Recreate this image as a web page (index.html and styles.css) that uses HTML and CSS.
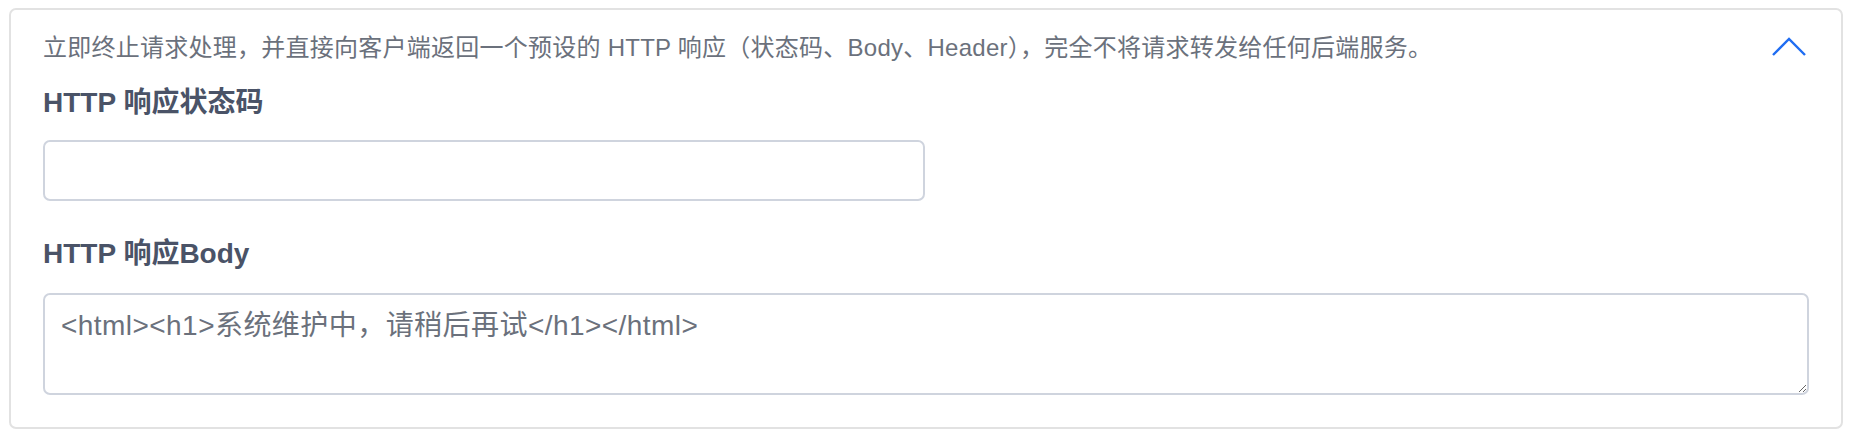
FILE: index.html
```html
<!DOCTYPE html>
<html lang="zh-CN">
<head>
<meta charset="utf-8">
<link rel="stylesheet" href="styles.css">
</head>
<body>
  <section class="card">
    <div class="card-head">
      <p class="desc">立即终止请求处理，并直接向客户端返回一个预设的 HTTP 响应（状态码、Body、Header），完全不将请求转发给任何后端服务。</p>
      <button class="toggle" type="button" aria-label="收起">
        <svg width="34" height="19" viewBox="0 0 34 19" fill="none">
          <polyline points="1,18 17,2 33,18" stroke="#1f6df2" stroke-width="2.4" stroke-linejoin="miter"/>
        </svg>
      </button>
    </div>
    <label class="field-label" for="status">HTTP 响应状态码</label>
    <input class="field-input" id="status" type="text">
    <label class="field-label body-label" for="body">HTTP 响应Body</label>
    <textarea class="field-textarea" id="body">&lt;html&gt;&lt;h1&gt;系统维护中，请稍后再试&lt;/h1&gt;&lt;/html&gt;</textarea>
  </section>
</body>
</html>
```

FILE: styles.css
```css
* { box-sizing: border-box; }

html, body {
  margin: 0;
  background: #ffffff;
}

body {
  padding: 8px 11px 13px 9px;
  font-family: "Liberation Sans", "Noto Sans CJK SC", sans-serif;
}

.card {
  display: flex;
  flex-direction: column;
  border: 2px solid #e2e2e2;
  border-radius: 7px;
  padding: 20px 32px 32px 32px;
  height: 421px;
}

.card-head {
  display: flex;
  align-items: center;
  justify-content: space-between;
  height: 36px;
}

.desc {
  margin: 0;
  font-size: 24px;
  line-height: 36px;
  letter-spacing: 0.25px;
  color: #6b717c;
  white-space: nowrap;
}

.toggle {
  display: flex;
  align-items: center;
  justify-content: center;
  margin: 0 3px 4px 0;
  padding: 0;
  border: 0;
  background: transparent;
  cursor: pointer;
}

.field-label {
  display: block;
  margin-top: 17px;
  font-size: 28px;
  line-height: 40px;
  font-weight: 700;
  color: #4a5367;
}

.body-label {
  margin-top: 33px;
}

.field-input {
  display: block;
  width: 882px;
  height: 61px;
  margin-top: 17px;
  border: 2px solid #cfd4de;
  border-radius: 7px;
  padding: 0 16px;
  font: inherit;
  font-size: 28px;
  color: #6b7280;
  background: #fff;
  outline: none;
}

.field-textarea {
  display: block;
  width: 100%;
  height: 102px;
  margin-top: 19px;
  border: 2px solid #cfd4de;
  border-radius: 7px;
  padding: 14px 16px 8px 16px;
  font-family: "Liberation Sans", "Noto Sans CJK SC", sans-serif;
  font-size: 28px;
  line-height: 34px;
  letter-spacing: 0.45px;
  color: #6b717c;
  background: #fff;
  resize: both;
  outline: none;
}
```
